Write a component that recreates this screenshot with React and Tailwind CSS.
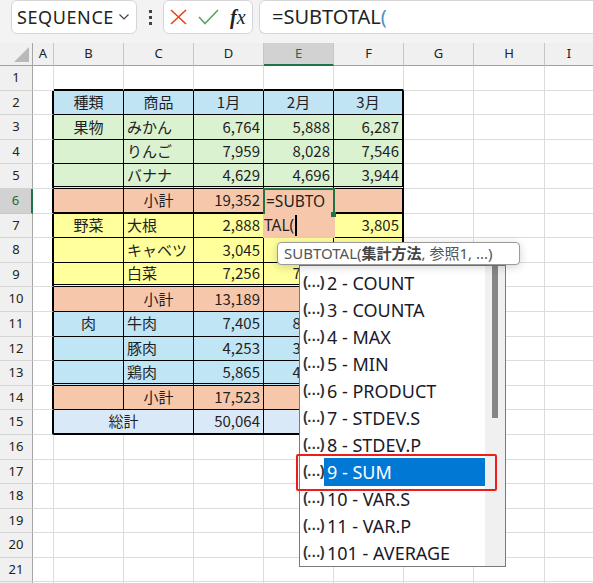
import React from "react";

const COLS = ["A", "B", "C", "D", "E", "F", "G", "H", "I"];

const TABLE = {
  2: { fill: "bg-[#c1e4f5]", cells: ["種類", "商品", "1月", "2月", "3月"] },
  3: { fill: "bg-[#daf2d0]", cells: ["果物", "みかん", "6,764", "5,888", "6,287"] },
  4: { fill: "bg-[#daf2d0]", cells: ["", "りんご", "7,959", "8,028", "7,546"] },
  5: { fill: "bg-[#daf2d0]", cells: ["", "バナナ", "4,629", "4,696", "3,944"] },
  6: { fill: "bg-[#f7c7ac]", cells: ["", "小計", "19,352", "", ""] },
  7: { fill: "bg-[#ffff9c]", cells: ["野菜", "大根", "2,888", "", "3,805"] },
  8: { fill: "bg-[#ffff9c]", cells: ["", "キャベツ", "3,045", "3,512", "2,960"] },
  9: { fill: "bg-[#ffff9c]", cells: ["", "白菜", "7,256", "7,013", "6,880"] },
  10: { fill: "bg-[#f7c7ac]", cells: ["", "小計", "13,189", "", ""] },
  11: { fill: "bg-[#c0e6f5]", cells: ["肉", "牛肉", "7,405", "8,120", "7,690"] },
  12: { fill: "bg-[#c0e6f5]", cells: ["", "豚肉", "4,253", "3,980", "4,105"] },
  13: { fill: "bg-[#c0e6f5]", cells: ["", "鶏肉", "5,865", "4,772", "5,210"] },
  14: { fill: "bg-[#f7c7ac]", cells: ["", "小計", "17,523", "", ""] },
  15: { fill: "bg-[#dae9f8]", cells: ["総計", "", "50,064", "", ""] },
};

const ITEMS = [
  "2 - COUNT",
  "3 - COUNTA",
  "4 - MAX",
  "5 - MIN",
  "6 - PRODUCT",
  "7 - STDEV.S",
  "8 - STDEV.P",
  "9 - SUM",
  "10 - VAR.S",
  "11 - VAR.P",
  "101 - AVERAGE",
];

const ROWS = Array.from({ length: 22 }, (_, i) => i + 1);

function borders(r, c) {
  const inT = r >= 2 && r <= 15 && c >= 2 && c <= 6;
  let right = "border-r border-r-[#dcdcdc]";
  if (c === 1 && r >= 2 && r <= 15) right = "border-r-2 border-r-black";
  else if (inT) right = c === 6 ? "border-r-2 border-r-black" : "border-r border-r-black";

  let bottom = "border-b border-b-[#dcdcdc]";
  if (r === 1 && c >= 2 && c <= 6) bottom = "border-b-2 border-b-black";
  else if (inT) {
    if (r === 15 || r === 6) bottom = "border-b-2 border-b-black";
    else if (r === 5 || r === 9 || r === 13) bottom = "border-b-[3px] border-double border-b-black";
    else bottom = "border-b border-b-black";
  }
  return `${right} ${bottom}`;
}

function align(r, c, text) {
  if (c === 2) return "justify-center";
  if (c === 3) return r === 2 || text === "小計" ? "justify-center" : "justify-start";
  return r === 2 ? "justify-center" : "justify-end";
}

function Editor() {
  return (
    <div className="absolute left-[-1px] top-[-1px] z-10 w-[72px] h-[50px] bg-[#f7c7ac] font-['Noto_Sans',sans-serif] text-[15.5px] text-[#1f1f1f]">
      <div className="relative h-[26px] border-2 border-[#217346] border-b-0 flex items-center pl-[1px] leading-none">
        =SUBTO
        <span className="absolute right-[-3px] bottom-[-3px] w-[5px] h-[5px] bg-[#217346]" />
      </div>
      <div className="h-[24px] flex items-center pl-[1px] leading-none">
        TAL(
        <span className="inline-block w-[2px] h-[21px] bg-black ml-[1px]" />
      </div>
    </div>
  );
}

function Cell({ r, c }) {
  const inT = r >= 2 && r <= 15 && c >= 2 && c <= 6;
  if (r === 15 && c === 3) return null;
  const text = inT ? TABLE[r].cells[c - 2] : "";
  const span = r === 15 && c === 2 ? "col-span-2" : "";
  const fill = inT ? TABLE[r].fill : "bg-white";
  return (
    <div
      className={`relative flex items-center px-[3px] overflow-visible whitespace-nowrap ${span} ${fill} ${borders(r, c)} ${align(r, c, text)}`}
    >
      {text}
      {r === 6 && c === 5 && <Editor />}
    </div>
  );
}

export default function App() {
  return (
    <div className="relative w-[593px] h-[583px] overflow-hidden bg-white text-[#1f1f1f]">
      {/* formula bar */}
      <div className="h-[43px] bg-[#f3f3f3] flex items-start pl-[11px]">
        <div className="w-[126px] h-[34px] bg-white border border-[#d6d6d6] rounded-[6px] flex items-center pl-[5px] pr-[7px] font-['Noto_Sans',sans-serif] text-[18px] tracking-[0.6px] text-[#222]">
          <span className="flex-1 leading-none">SEQUENCE</span>
          <svg width="10" height="6" viewBox="0 0 10 6" fill="none" stroke="#444" strokeWidth="1.2">
            <path d="M0.5 0.5 L5 5 L9.5 0.5" />
          </svg>
        </div>
        <div className="w-[26px] h-[34px] flex flex-col items-center justify-center gap-[3px]">
          <span className="w-[3px] h-[3px] bg-[#444]" />
          <span className="w-[3px] h-[3px] bg-[#444]" />
          <span className="w-[3px] h-[3px] bg-[#444]" />
        </div>
        <div className="w-[90px] h-[34px] bg-white border border-[#d6d6d6] rounded-[6px] flex items-center pl-[6px]">
          <svg width="17" height="16" viewBox="0 0 17 16" fill="none" stroke="#e5421d" strokeWidth="1.6">
            <path d="M1 1 L16 15 M16 1 L1 15" />
          </svg>
          <svg className="ml-[11px]" width="21" height="16" viewBox="0 0 21 16" fill="none" stroke="#5ba36d" strokeWidth="1.6">
            <path d="M1 8 L7 14.5 L20 1" />
          </svg>
          <span className="ml-[11px] font-['Liberation_Serif',serif] italic text-[20px] leading-none text-[#222]">
            <span className="font-bold">f</span>x
          </span>
        </div>
        <div className="flex-1 ml-[6px] h-[34px] bg-white border border-[#d6d6d6] border-r-0 rounded-l-[6px] flex items-center pl-[12px] font-['Noto_Sans',sans-serif] text-[20px] leading-none text-[#222]">
          =SUBTOTAL<span className="text-[#4f8fc4]">(</span>
        </div>
      </div>

      {/* sheet grid */}
      <div className="grid grid-cols-[33px_21px_70px_70px_70px_70px_70px_70px_71px_49px] grid-rows-[23px_repeat(22,24.6px)] font-['Noto_Sans_CJK_JP',sans-serif] text-[15px]">
        <div className="relative bg-[#f0f0f0] border-r border-r-[#a6a6a6] border-b border-b-[#a0a0a0]">
          <svg className="absolute right-[3px] bottom-[3px]" width="15" height="15" viewBox="0 0 15 15">
            <path d="M15 0 L15 15 L0 15 Z" fill="#b9b9b9" />
          </svg>
        </div>
        {COLS.map((l) =>
          l === "E" ? (
            <div key={l} className="bg-[#d2d2d2] border-r border-r-[#c6c6c6] border-b-2 border-b-[#217346] flex items-center justify-center font-['Noto_Sans',sans-serif] text-[13px] text-[#1d6b40]">
              {l}
            </div>
          ) : (
            <div key={l} className="bg-[#f0f0f0] border-r border-r-[#c6c6c6] border-b border-b-[#a0a0a0] flex items-center justify-center font-['Noto_Sans',sans-serif] text-[13px] text-[#222]">
              {l}
            </div>
          )
        )}
        {ROWS.map((r) => (
          <React.Fragment key={r}>
            {r === 6 ? (
              <div className="bg-[#d2d2d2] border-r-2 border-r-[#217346] border-b border-b-[#c8c8c8] flex items-center justify-center font-['Noto_Sans',sans-serif] text-[13px] text-[#1d6b40]">
                {r}
              </div>
            ) : (
              <div className="bg-[#f0f0f0] border-r border-r-[#a6a6a6] border-b border-b-[#d4d4d4] flex items-center justify-center font-['Noto_Sans',sans-serif] text-[13px] text-[#222]">
                {r}
              </div>
            )}
            {COLS.map((_, i) => (
              <Cell key={i} r={r} c={i + 1} />
            ))}
          </React.Fragment>
        ))}
      </div>

      {/* autocomplete list */}
      <div className="absolute left-[299px] top-[265px] w-[207px] h-[302px] z-20 bg-white border border-[#7a7a7a] flex font-['Noto_Sans',sans-serif] text-[18px] text-[#1a1a2a]">
        <div className="flex-1 pt-[3px]">
          {ITEMS.map((it) => (
            <div key={it} className="h-[27px] flex items-center">
              <span className="w-[24px] pl-[3px] font-['Liberation_Sans',sans-serif] font-bold text-[14px] tracking-[-0.8px] text-[#333]">(…)</span>
              {it === "9 - SUM" ? (
                <span className="flex-1 h-[28px] bg-[#0078d4] text-white flex items-center pl-[3px] leading-none">{it}</span>
              ) : (
                <span className="pl-[3px] leading-none">{it}</span>
              )}
            </div>
          ))}
        </div>
        <div className="w-[20px] bg-[#f0f0f0] pl-[7px]">
          <div className="w-[6px] h-[152px] bg-[#858585]" />
        </div>
      </div>

      {/* selection highlight box */}
      <div className="absolute left-[296px] top-[454px] w-[201px] h-[37px] z-30 border-2 border-[#ee1c1c] rounded-[2px]" />

      {/* function tooltip */}
      <div className="absolute left-[277px] top-[242px] z-30 w-[243px] h-[23px] bg-white border border-[#9a9a9a] rounded-[4px] shadow-[0_2px_10px_rgba(0,0,0,0.18)] flex items-center pl-[6px] font-['Noto_Sans','Noto_Sans_CJK_JP',sans-serif] text-[15px] leading-none text-[#555] whitespace-nowrap">
        SUBTOTAL(<span className="font-bold text-[#444]">集計方法</span>, 参照1, ...)
      </div>
    </div>
  );
}
